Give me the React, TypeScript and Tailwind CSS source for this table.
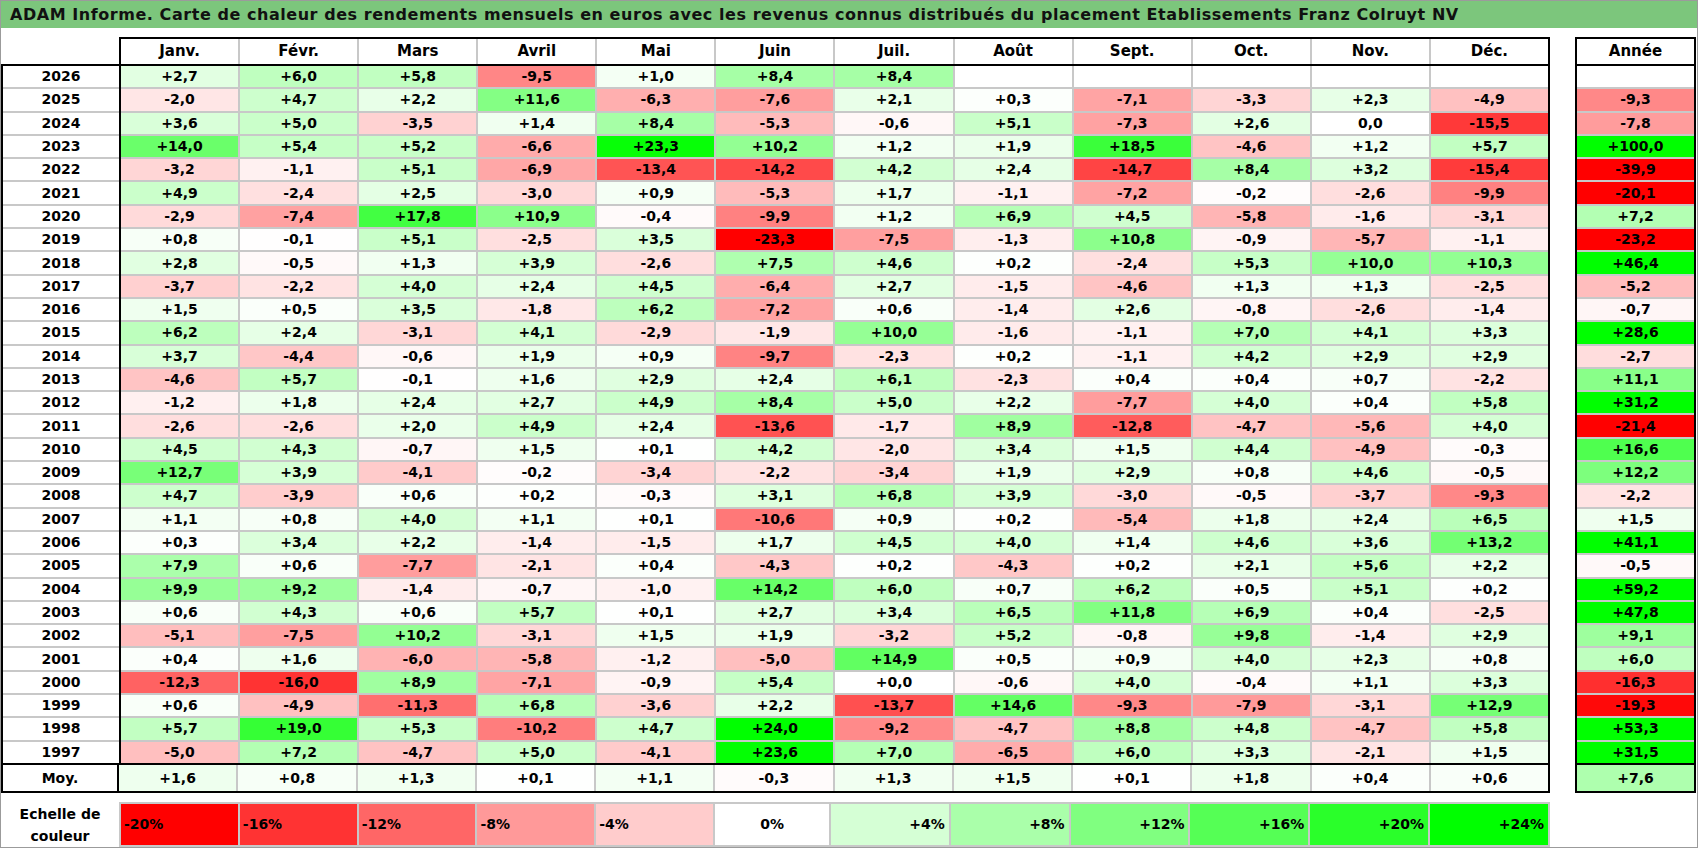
import React from 'react';

const MONTHS = ['Janv.', 'Févr.', 'Mars', 'Avril', 'Mai', 'Juin', 'Juil.', 'Août', 'Sept.', 'Oct.', 'Nov.', 'Déc.'];

// 12 mois + année, '.' = pas encore de valeur
const ROWS: [string, string][] = [
  ['2026', '+2,7 +6,0 +5,8 -9,5 +1,0 +8,4 +8,4 . . . . . .'],
  ['2025', '-2,0 +4,7 +2,2 +11,6 -6,3 -7,6 +2,1 +0,3 -7,1 -3,3 +2,3 -4,9 -9,3'],
  ['2024', '+3,6 +5,0 -3,5 +1,4 +8,4 -5,3 -0,6 +5,1 -7,3 +2,6 0,0 -15,5 -7,8'],
  ['2023', '+14,0 +5,4 +5,2 -6,6 +23,3 +10,2 +1,2 +1,9 +18,5 -4,6 +1,2 +5,7 +100,0'],
  ['2022', '-3,2 -1,1 +5,1 -6,9 -13,4 -14,2 +4,2 +2,4 -14,7 +8,4 +3,2 -15,4 -39,9'],
  ['2021', '+4,9 -2,4 +2,5 -3,0 +0,9 -5,3 +1,7 -1,1 -7,2 -0,2 -2,6 -9,9 -20,1'],
  ['2020', '-2,9 -7,4 +17,8 +10,9 -0,4 -9,9 +1,2 +6,9 +4,5 -5,8 -1,6 -3,1 +7,2'],
  ['2019', '+0,8 -0,1 +5,1 -2,5 +3,5 -23,3 -7,5 -1,3 +10,8 -0,9 -5,7 -1,1 -23,2'],
  ['2018', '+2,8 -0,5 +1,3 +3,9 -2,6 +7,5 +4,6 +0,2 -2,4 +5,3 +10,0 +10,3 +46,4'],
  ['2017', '-3,7 -2,2 +4,0 +2,4 +4,5 -6,4 +2,7 -1,5 -4,6 +1,3 +1,3 -2,5 -5,2'],
  ['2016', '+1,5 +0,5 +3,5 -1,8 +6,2 -7,2 +0,6 -1,4 +2,6 -0,8 -2,6 -1,4 -0,7'],
  ['2015', '+6,2 +2,4 -3,1 +4,1 -2,9 -1,9 +10,0 -1,6 -1,1 +7,0 +4,1 +3,3 +28,6'],
  ['2014', '+3,7 -4,4 -0,6 +1,9 +0,9 -9,7 -2,3 +0,2 -1,1 +4,2 +2,9 +2,9 -2,7'],
  ['2013', '-4,6 +5,7 -0,1 +1,6 +2,9 +2,4 +6,1 -2,3 +0,4 +0,4 +0,7 -2,2 +11,1'],
  ['2012', '-1,2 +1,8 +2,4 +2,7 +4,9 +8,4 +5,0 +2,2 -7,7 +4,0 +0,4 +5,8 +31,2'],
  ['2011', '-2,6 -2,6 +2,0 +4,9 +2,4 -13,6 -1,7 +8,9 -12,8 -4,7 -5,6 +4,0 -21,4'],
  ['2010', '+4,5 +4,3 -0,7 +1,5 +0,1 +4,2 -2,0 +3,4 +1,5 +4,4 -4,9 -0,3 +16,6'],
  ['2009', '+12,7 +3,9 -4,1 -0,2 -3,4 -2,2 -3,4 +1,9 +2,9 +0,8 +4,6 -0,5 +12,2'],
  ['2008', '+4,7 -3,9 +0,6 +0,2 -0,3 +3,1 +6,8 +3,9 -3,0 -0,5 -3,7 -9,3 -2,2'],
  ['2007', '+1,1 +0,8 +4,0 +1,1 +0,1 -10,6 +0,9 +0,2 -5,4 +1,8 +2,4 +6,5 +1,5'],
  ['2006', '+0,3 +3,4 +2,2 -1,4 -1,5 +1,7 +4,5 +4,0 +1,4 +4,6 +3,6 +13,2 +41,1'],
  ['2005', '+7,9 +0,6 -7,7 -2,1 +0,4 -4,3 +0,2 -4,3 +0,2 +2,1 +5,6 +2,2 -0,5'],
  ['2004', '+9,9 +9,2 -1,4 -0,7 -1,0 +14,2 +6,0 +0,7 +6,2 +0,5 +5,1 +0,2 +59,2'],
  ['2003', '+0,6 +4,3 +0,6 +5,7 +0,1 +2,7 +3,4 +6,5 +11,8 +6,9 +0,4 -2,5 +47,8'],
  ['2002', '-5,1 -7,5 +10,2 -3,1 +1,5 +1,9 -3,2 +5,2 -0,8 +9,8 -1,4 +2,9 +9,1'],
  ['2001', '+0,4 +1,6 -6,0 -5,8 -1,2 -5,0 +14,9 +0,5 +0,9 +4,0 +2,3 +0,8 +6,0'],
  ['2000', '-12,3 -16,0 +8,9 -7,1 -0,9 +5,4 +0,0 -0,6 +4,0 -0,4 +1,1 +3,3 -16,3'],
  ['1999', '+0,6 -4,9 -11,3 +6,8 -3,6 +2,2 -13,7 +14,6 -9,3 -7,9 -3,1 +12,9 -19,3'],
  ['1998', '+5,7 +19,0 +5,3 -10,2 +4,7 +24,0 -9,2 -4,7 +8,8 +4,8 -4,7 +5,8 +53,3'],
  ['1997', '-5,0 +7,2 -4,7 +5,0 -4,1 +23,6 +7,0 -6,5 +6,0 +3,3 -2,1 +1,5 +31,5'],
];

const AVG = '+1,6 +0,8 +1,3 +0,1 +1,1 -0,3 +1,3 +1,5 +0,1 +1,8 +0,4 +0,6 +7,6'.split(' ');

const SCALE = [-20, -16, -12, -8, -4, 0, 4, 8, 12, 16, 20, 24];

// échelle 3 couleurs : rouge à -20, blanc à 0, vert à +24
function heat(raw: string): string {
  if (raw === '.') return '#ffffff';
  const v = parseFloat(raw.replace(',', '.'));
  if (v >= 0) {
    const c = Math.round(255 * (1 - Math.min(v / 24, 1)));
    return `rgb(${c},255,${c})`;
  }
  const c = Math.round(255 * (1 - Math.min(-v / 20, 1)));
  return `rgb(255,${c},${c})`;
}

function Cell({ value, last }: { value: string; last?: boolean }) {
  return (
    <div
      className={`flex-1 flex items-center justify-center text-[14px] ${last ? '' : 'border-r-2 border-[#c8c8c8]'}`}
      style={{ backgroundColor: heat(value) }}
    >
      {value === '.' ? '' : value}
    </div>
  );
}

export default function App() {
  const rows = ROWS.map(([year, line]) => ({ year, values: line.split(' ') }));

  return (
    <div className="w-[1698px] h-[848px] border border-[#9b9b9b] bg-white text-black font-bold font-['DejaVu_Sans',sans-serif] overflow-hidden">
      <div className="h-[27px] bg-[#7cc67c] pl-[9px] flex items-center text-[16px] tracking-[0.55px] text-[#111]">
        ADAM Informe. Carte de chaleur des rendements mensuels en euros avec les revenus connus distribués du placement Etablissements Franz Colruyt NV
      </div>

      <div className="mt-[9px] flex">
        {/* tableau mensuel */}
        <div className="w-[1549px] flex flex-col">
          <div className="h-[29px] flex">
            <div className="w-[118px] border-b-2 border-black" />
            <div className="flex-1 flex border-2 border-black">
              {MONTHS.map((m, i) => (
                <div
                  key={m}
                  className={`flex-1 flex items-center justify-center text-[15px] ${i < 11 ? 'border-r-2 border-[#c8c8c8]' : ''}`}
                >
                  {m}
                </div>
              ))}
            </div>
          </div>

          <div className="h-[697px] flex border-x-2 border-black">
            <div className="w-[118px] flex flex-col border-r-2 border-black">
              {rows.map((r, i) => (
                <div
                  key={r.year}
                  className={`flex-1 flex items-center justify-center text-[14px] ${i < 29 ? 'border-b-2 border-[#c8c8c8]' : ''}`}
                >
                  {r.year}
                </div>
              ))}
            </div>
            <div className="flex-1 flex flex-col">
              {rows.map((r, i) => (
                <div key={r.year} className={`flex-1 flex ${i < 29 ? 'border-b-2 border-[#c8c8c8]' : ''}`}>
                  {r.values.slice(0, 12).map((v, j) => (
                    <Cell key={j} value={v} last={j === 11} />
                  ))}
                </div>
              ))}
            </div>
          </div>

          <div className="h-[30px] flex border-2 border-black">
            <div className="w-[116px] flex items-center justify-center text-[14px] border-r-2 border-black">Moy.</div>
            <div className="flex-1 flex">
              {AVG.slice(0, 12).map((v, j) => (
                <Cell key={j} value={v} last={j === 11} />
              ))}
            </div>
          </div>

          <div className="mt-[9px] h-[45px] flex">
            <div className="w-[118px] flex flex-col items-center justify-center text-[14px] leading-[22px]">
              <span>Echelle de</span>
              <span>couleur</span>
            </div>
            <div className="flex-1 flex border-2 border-[#c8c8c8]">
              {SCALE.map((s, i) => (
                <div
                  key={s}
                  className={`flex-1 flex items-center text-[14px] ${i < 11 ? 'border-r-2 border-[#c8c8c8]' : ''} ${s < 0 ? 'justify-start pl-[3px]' : s === 0 ? 'justify-center' : 'justify-end pr-[4px]'}`}
                  style={{ backgroundColor: heat(String(s)) }}
                >
                  {s > 0 ? `+${s}%` : `${s}%`}
                </div>
              ))}
            </div>
          </div>
        </div>

        {/* colonne année */}
        <div className="ml-[25px] w-[121px] flex flex-col">
          <div className="h-[29px] flex items-center justify-center border-2 border-black text-[15px]">Année</div>
          <div className="h-[697px] flex flex-col border-x-2 border-black">
            {rows.map((r, i) => (
              <div key={r.year} className={`flex-1 flex ${i < 29 ? 'border-b-2 border-[#c8c8c8]' : ''}`}>
                <Cell value={r.values[12]} last />
              </div>
            ))}
          </div>
          <div className="h-[30px] flex border-2 border-black">
            <Cell value={AVG[12]} last />
          </div>
        </div>
      </div>
    </div>
  );
}
